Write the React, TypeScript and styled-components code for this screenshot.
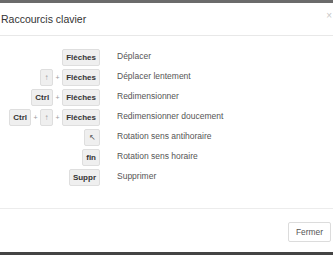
import React from 'react';
import styled, { createGlobalStyle } from 'styled-components';

const GlobalStyle = createGlobalStyle`
  html, body {
    margin: 0;
    padding: 0;
    background: #fff;
  }
  body {
    font-family: "Liberation Sans", Arial, sans-serif;
    color: #333;
  }
`;

const Screen = styled.div`
  width: 333px;
  height: 255px;
  display: flex;
  flex-direction: column;
  overflow: hidden;
  background: #fff;
`;

const Backdrop = styled.div<{ $h: number; $color: string }>`
  height: ${p => p.$h}px;
  flex: none;
  background: ${p => p.$color};
`;

const Header = styled.div`
  height: 32px;
  flex: none;
  display: flex;
  align-items: center;
  justify-content: space-between;
  padding: 0 0 0 1px;
  border-bottom: 1px solid #e8e8e8;
`;

const Title = styled.h4`
  margin: 0;
  font-size: 10.5px;
  font-weight: normal;
  color: #333;
`;

const Close = styled.span`
  font-size: 10px;
  line-height: 10px;
  color: #c8c8c8;
  margin-right: 1px;
  margin-top: -6px;
`;

const Body = styled.div`
  flex: 1;
  padding: 13px 0 0 0;
  border-bottom: 1px solid #ececec;
`;

const Shortcuts = styled.div`
  display: grid;
  grid-template-columns: 100px 1fr;
  grid-auto-rows: 20px;
  column-gap: 17px;
`;

const Keys = styled.div`
  display: flex;
  justify-content: flex-end;
  align-items: flex-start;
`;

const Key = styled.kbd<{ $tone?: string }>`
  display: inline-block;
  height: 17px;
  box-sizing: border-box;
  line-height: 15px;
  padding: 0 ${p => (p.$tone ? 3.5 : 3)}px;
  font-family: "Liberation Sans", Arial, sans-serif;
  font-size: 8px;
  font-weight: ${p => (p.$tone ? 'normal' : 'bold')};
  color: ${p => p.$tone || '#333'};
  background: #efefef;
  border: 1px solid #dedede;
  border-radius: 2px;
`;

const Plus = styled.span`
  font-size: 7px;
  color: #999;
  line-height: 17px;
  margin: 0 2.5px;
`;

const Action = styled.div`
  font-size: 8.5px;
  color: #555;
  line-height: 14px;
`;

const Footer = styled.div`
  height: 43px;
  flex: none;
  display: flex;
  justify-content: flex-end;
  align-items: flex-start;
  padding: 13px 2px 0 0;
  box-sizing: border-box;
`;

const Button = styled.button`
  height: 20px;
  padding: 0 7px;
  font-family: "Liberation Sans", Arial, sans-serif;
  font-size: 8.4px;
  color: #555;
  background: #fff;
  border: 1px solid #dcdcdc;
  border-radius: 2px;
`;

const rows: { keys: string[]; label: string }[] = [
  { keys: ['Flèches'], label: 'Déplacer' },
  { keys: ['↑', 'Flèches'], label: 'Déplacer lentement' },
  { keys: ['Ctrl', 'Flèches'], label: 'Redimensionner' },
  { keys: ['Ctrl', '↑', 'Flèches'], label: 'Redimensionner doucement' },
  { keys: ['↖'], label: 'Rotation sens antihoraire' },
  { keys: ['fin'], label: 'Rotation sens horaire' },
  { keys: ['Suppr'], label: 'Supprimer' },
];

const toneOf = (k: string) => (k === '↑' ? '#999' : k === '↖' ? '#555' : undefined);

export default function App() {
  return (
    <Screen>
      <GlobalStyle />
      <Backdrop $h={3} $color="#6b6b6b" />
      <Header>
        <Title>Raccourcis clavier</Title>
        <Close>×</Close>
      </Header>
      <Body>
        <Shortcuts>
          {rows.map(row => (
            <React.Fragment key={row.label}>
              <Keys>
                {row.keys.map((k, i) => (
                  <React.Fragment key={k + i}>
                    {i > 0 && <Plus>+</Plus>}
                    <Key $tone={toneOf(k)}>{k}</Key>
                  </React.Fragment>
                ))}
              </Keys>
              <Action>{row.label}</Action>
            </React.Fragment>
          ))}
        </Shortcuts>
      </Body>
      <Footer>
        <Button>Fermer</Button>
      </Footer>
      <Backdrop $h={3} $color="#444" />
    </Screen>
  );
}
